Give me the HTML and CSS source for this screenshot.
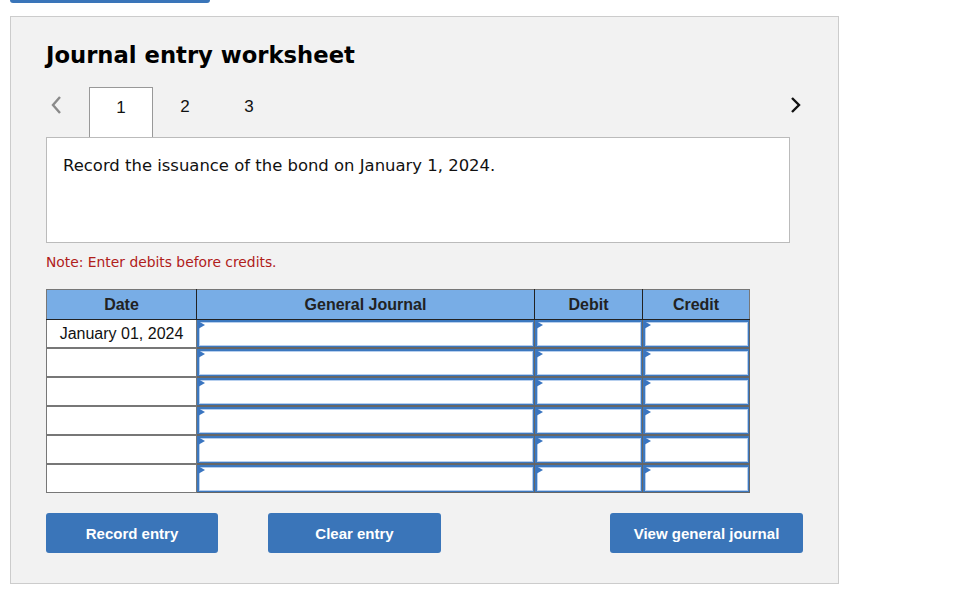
FILE: index.html
```html
<!DOCTYPE html>
<html>
<head>
<meta charset="utf-8">
<link rel="stylesheet" href="styles.css">
</head>
<body>
<div class="topbar"></div>
<div class="panel">
  <h1 class="title">Journal entry worksheet</h1>
  <div class="nav">
    <span class="chev chev-left">
      <svg width="12" height="20" viewBox="0 0 12 20"><path d="M10 2 L3 10 L10 18" fill="none" stroke="#8a8a8a" stroke-width="2.4"/></svg>
    </span>
    <span class="tab active">1</span>
    <span class="tab">2</span>
    <span class="tab">3</span>
    <span class="spacer"></span>
    <span class="chev chev-right">
      <svg width="12" height="20" viewBox="0 0 12 20"><path d="M2 3 L9 10 L2 17" fill="none" stroke="#111" stroke-width="2.4"/></svg>
    </span>
  </div>
  <div class="question">Record the issuance of the bond on January 1, 2024.</div>
  <p class="note">Note: Enter debits before credits.</p>
  <table class="journal">
    <thead>
      <tr>
        <th class="c-date">Date</th>
        <th class="c-gj">General Journal</th>
        <th class="c-dr">Debit</th>
        <th class="c-cr">Credit</th>
      </tr>
    </thead>
    <tbody>
      <tr>
        <td class="date">January 01, 2024</td>
        <td class="in"><div class="box"></div></td>
        <td class="in"><div class="box"></div></td>
        <td class="in"><div class="box"></div></td>
      </tr>
      <tr>
        <td class="date"></td>
        <td class="in"><div class="box"></div></td>
        <td class="in"><div class="box"></div></td>
        <td class="in"><div class="box"></div></td>
      </tr>
      <tr>
        <td class="date"></td>
        <td class="in"><div class="box"></div></td>
        <td class="in"><div class="box"></div></td>
        <td class="in"><div class="box"></div></td>
      </tr>
      <tr>
        <td class="date"></td>
        <td class="in"><div class="box"></div></td>
        <td class="in"><div class="box"></div></td>
        <td class="in"><div class="box"></div></td>
      </tr>
      <tr>
        <td class="date"></td>
        <td class="in"><div class="box"></div></td>
        <td class="in"><div class="box"></div></td>
        <td class="in"><div class="box"></div></td>
      </tr>
      <tr>
        <td class="date"></td>
        <td class="in"><div class="box"></div></td>
        <td class="in"><div class="box"></div></td>
        <td class="in"><div class="box"></div></td>
      </tr>
    </tbody>
  </table>
  <div class="actions">
    <button class="btn btn-record">Record entry</button>
    <button class="btn btn-clear">Clear entry</button>
    <button class="btn btn-view">View general journal</button>
  </div>
</div>
</body>
</html>
```
FILE: styles.css
```css
html, body {
  margin: 0;
  padding: 0;
  background: #ffffff;
}
body {
  font-family: "DejaVu Sans", Verdana, sans-serif;
  color: #111;
}
.topbar {
  width: 200px;
  height: 3px;
  margin-left: 10px;
  background: #3a75b9;
  border-radius: 0 0 4px 4px;
}
.panel {
  box-sizing: border-box;
  width: 829px;
  height: 568px;
  margin: 13px 0 0 10px;
  padding: 0 48px 0 35px;
  background: #f2f2f2;
  border: 1px solid #cccccc;
}
.title {
  margin: 24px 0 0 0;
  font-size: 22.7px;
  line-height: 28px;
  font-weight: bold;
  color: #000;
}
.nav {
  display: flex;
  align-items: stretch;
  height: 50px;
  margin-top: 18px;
  margin-right: -12px;
  font-family: "Liberation Sans", Arial, sans-serif;
  font-size: 17px;
}
.chev {
  display: flex;
  align-items: flex-start;
  padding-top: 8px;
}
.chev-left {
  width: 43px;
  padding-left: 4px;
  box-sizing: border-box;
}
.tab {
  box-sizing: border-box;
  width: 64px;
  display: flex;
  justify-content: center;
  padding-top: 10px;
  color: #111;
}
.tab.active {
  background: #fff;
  border: 1px solid #999;
  border-bottom: none;
}
.spacer {
  flex: 1;
}
.question {
  box-sizing: border-box;
  height: 106px;
  padding: 18px 16px;
  background: #fff;
  border: 1px solid #bbbbbb;
  font-size: 16.45px;
  line-height: 20px;
  color: #111;
}
.note {
  margin: 11px 0 0 0;
  font-size: 13.85px;
  line-height: 16px;
  color: #b0201a;
}
.journal {
  margin-top: 19px;
  border-collapse: collapse;
  font-family: "Liberation Sans", Arial, sans-serif;
  font-size: 16px;
  width: 699px;
  table-layout: fixed;
}
.journal th {
  height: 29px;
  padding: 0;
  background: #78ade6;
  border: 1px solid #222;
  border-top-color: #777;
  font-weight: bold;
  color: #222;
}
.journal th:first-child { border-left-color: #777; }
.journal th:last-child { border-right-color: #777; }
.c-date { width: 149px; }
.c-gj { width: 337px; }
.c-dr { width: 107px; }
.c-cr { width: 106px; }
.journal td {
  height: 27px;
  padding: 0;
  border: 1px solid #777;
  background: #fff;
}
.journal tbody tr + tr td {
  border-top-width: 2px;
}
.journal td.date {
  text-align: center;
  color: #111;
}
.journal td.in {
  position: relative;
  border-color: #666;
}
.box {
  box-sizing: border-box;
  height: 100%;
  min-height: 27px;
  border-top: 2px solid #3c78bf;
  border-left: 2px solid #3c78bf;
  border-right: 1px solid #3c78bf;
  border-bottom: 1px solid #3c78bf;
  box-shadow: inset 1px 1px 0 #b7cfee, inset -1px -1px 0 #b7cfee;
  background: #fff;
}
.box::before {
  content: "";
  position: absolute;
  left: 1px;
  top: 1px;
  width: 0;
  height: 0;
  border-top: 4px solid transparent;
  border-bottom: 4px solid transparent;
  border-left: 7px solid #3a75c0;
}
.actions {
  display: flex;
  margin-top: 20px;
}
.btn {
  flex-shrink: 0;
  height: 40px;
  border: none;
  border-radius: 3px;
  background: #3a75b9;
  color: #fff;
  font-family: "Liberation Sans", Arial, sans-serif;
  font-weight: bold;
  font-size: 15px;
  padding: 0;
}
.btn-record { width: 172px; }
.btn-clear { width: 173px; margin-left: 50px; }
.btn-view { width: 193px; margin-left: 169px; }
```
